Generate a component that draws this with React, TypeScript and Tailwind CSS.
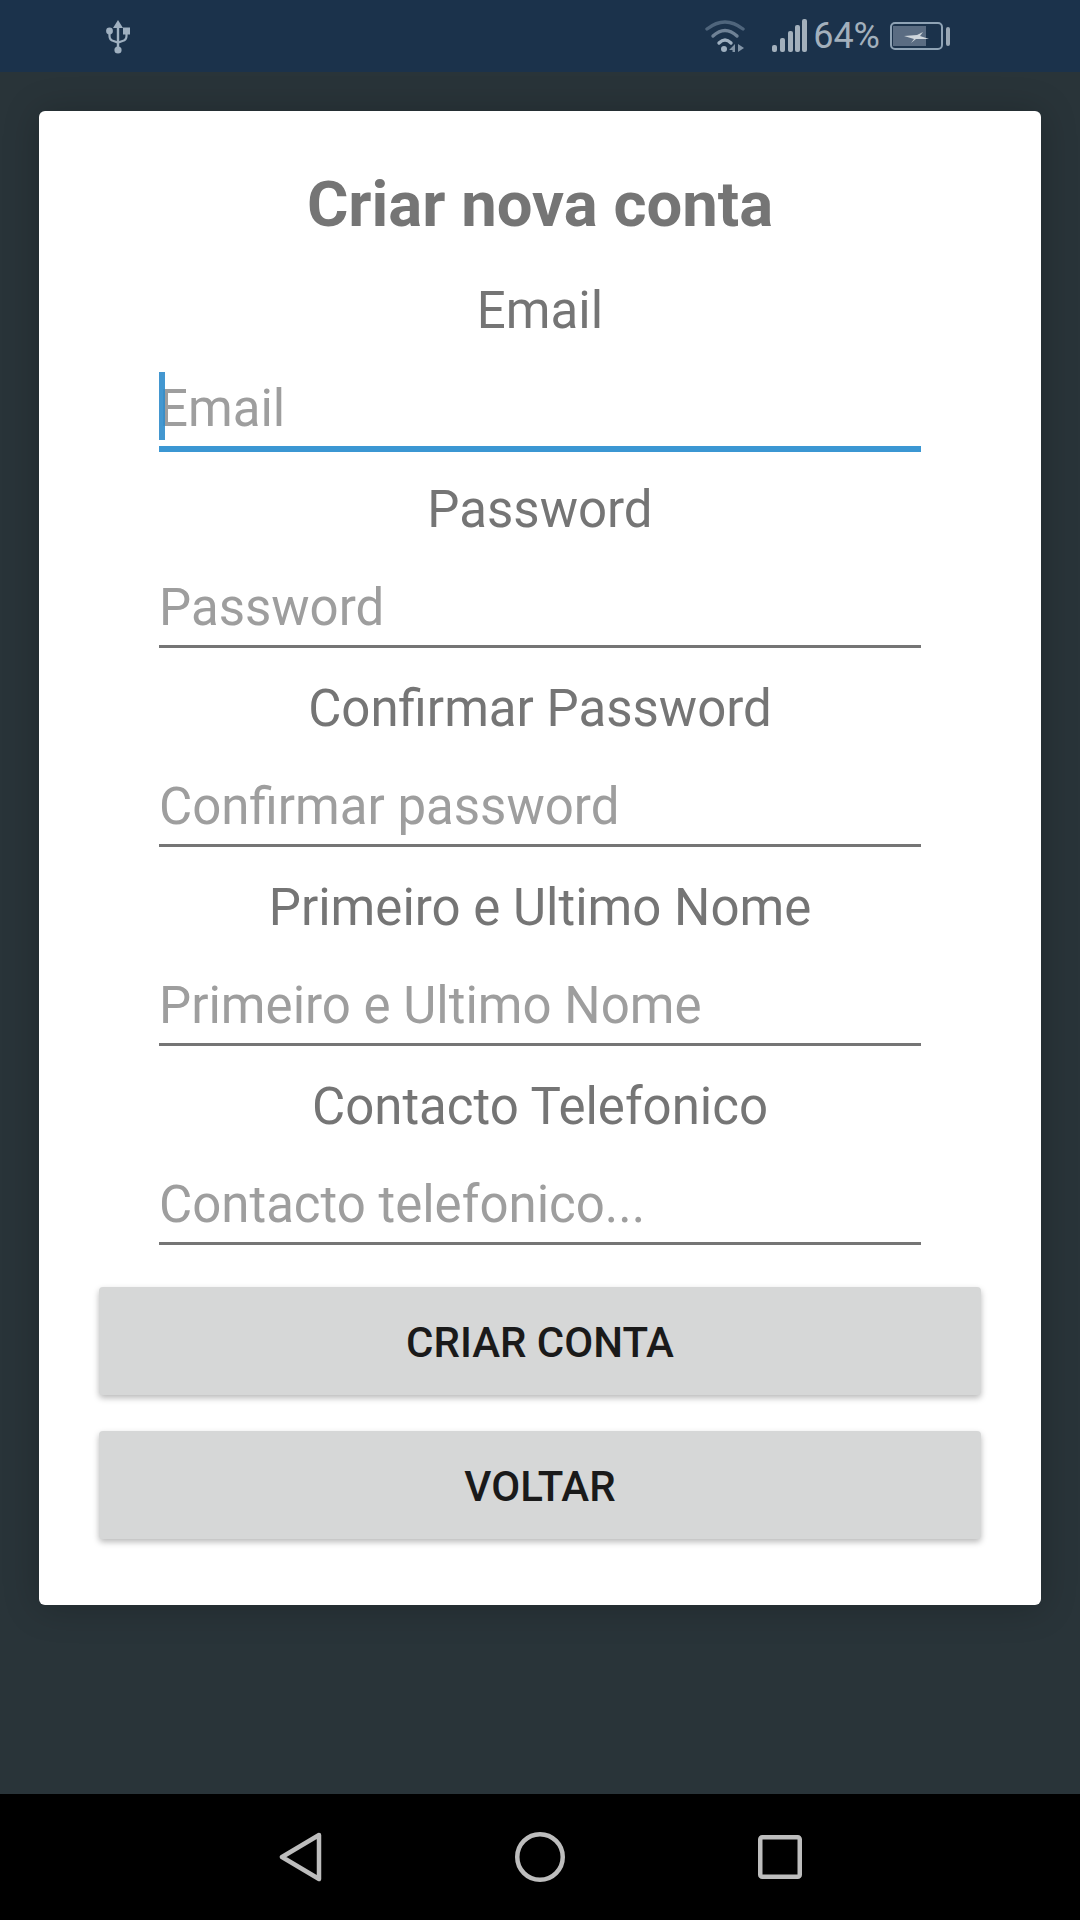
import React from "react";

const fields = [
  { label: "Password", ph: "Password" },
  { label: "Confirmar Password", ph: "Confirmar password" },
  { label: "Primeiro e Ultimo Nome", ph: "Primeiro e Ultimo Nome" },
  { label: "Contacto Telefonico", ph: "Contacto telefonico..." },
];

function Field({ label, ph, active }: { label: string; ph: string; active?: boolean }) {
  return (
    <div className="flex flex-col w-[762px] h-[199px]">
      <div className="h-[120px] pt-[2px] flex items-center justify-center text-[51px] text-[#757575]">{label}</div>
      <div className="relative h-[79px] pt-[2px] border-b-[3px] border-[#757575] flex items-center text-[51px] text-[#9e9e9e]">
        {active && <span className="absolute left-0 top-[2px] w-[6px] h-[68px] bg-[#2f8ccb]/90" />}
        {active && <span className="absolute left-0 right-0 bottom-[-6px] h-[6px] bg-[#3b97d3]" />}
        <span>{ph}</span>
      </div>
    </div>
  );
}

export default function App() {
  return (
    <div className="w-[1080px] h-[1920px] flex flex-col bg-[#293439] font-['Roboto',sans-serif] overflow-hidden">
      <div className="relative z-10 h-[72px] shrink-0 bg-[#1b324b] flex items-center justify-between pl-[105px] pr-[130px]">
        <svg width="26" height="36" viewBox="0 0 26 36" className="mt-[1px]">
          <g fill="#9fb0c0" stroke="#9fb0c0">
            <path d="M13 1l5 8h-10z" stroke="none" />
            <path d="M13 8v22" strokeWidth="2.4" fill="none" />
            <circle cx="13" cy="31" r="3.6" stroke="none" />
            <circle cx="4.5" cy="12" r="3.4" stroke="none" />
            <rect x="18" y="8.5" width="7" height="7" stroke="none" />
            <path d="M4.5 14v3q0 4 4 5l4.500 1.500l4.500-1.500q4-1 4-5v-3" strokeWidth="2.2" fill="none" />
          </g>
        </svg>
        <div className="flex items-center">
          <svg width="42" height="36" viewBox="0 0 42 36" className="mr-[25px]">
            <g fill="none" strokeLinecap="round">
              <path d="M2 11Q20 -3 38 11" stroke="#4f657c" strokeWidth="3.4" />
              <path d="M8 18Q20 7 32 18" stroke="#6f8296" strokeWidth="3.4" />
              <path d="M14 25Q20 19 26 25" stroke="#9fb0c0" strokeWidth="3.4" />
            </g>
            <circle cx="19" cy="31" r="3" fill="#9fb0c0" />
            <path d="M30 26v8h-2.500v-2h-3.500zM33 26l6 4-6 4z" fill="#8294a6" />
          </svg>
          <svg width="36" height="34" viewBox="0 0 36 34" className="mr-[5px]">
            <g fill="#a3b0bc">
              <rect x="0" y="26" width="5" height="7" rx="2" />
              <rect x="8" y="19" width="5" height="14" rx="2" />
              <rect x="16" y="12" width="5" height="21" rx="2" />
              <rect x="23" y="6" width="5" height="27" rx="2" />
              <rect x="30" y="0" width="5" height="33" rx="2" />
            </g>
          </svg>
          <span className="text-[36px] leading-none text-[#a3b0bc] mr-[10px]">64%</span>
          <div className="flex items-center">
            <div className="relative w-[53px] h-[28px] border-[2px] border-[#8fa3b5] rounded-[5px] px-[1px] py-[2px]">
              <div className="h-full w-[33px] bg-[#5a6c82]" />
              <svg width="25" height="12" viewBox="0 0 25 12" className="absolute left-[12px] top-[7px]">
                <path d="M0 5L13 4L19 1L16 5L25 8L12 8L7 12L10 8Z" fill="#cfd6dc" />
              </svg>
            </div>
            <div className="w-[4px] h-[19px] ml-[3px] bg-[#9aa8b5] rounded-[2px]" />
          </div>
        </div>
      </div>

      <div className="flex-1 flex flex-col items-center pt-[39px]">
        <div className="w-[1002px] h-[1494px] bg-white rounded-[6px] flex flex-col items-center pt-[55px] shadow-[0_2px_36px_rgba(0,0,0,0.22)]">
          <h1 className="h-[76px] text-[63.4px] leading-[76px] font-bold text-[#757575]">Criar nova conta</h1>
          <div className="mt-[8px] flex flex-col items-center">
            <Field label="Email" ph="Email" active />
            {fields.map((f) => (
              <Field key={f.label} label={f.label} ph={f.ph} />
            ))}
          </div>
          <div className="mt-[42px] flex flex-col gap-[36px]">
            <button className="w-[882px] h-[108px] pt-[3px] bg-[#d6d7d7] rounded-[4px] shadow-[0_3px_6px_rgba(0,0,0,0.28)] text-[42px] font-medium text-[#1a1a1a]">CRIAR CONTA</button>
            <button className="w-[882px] h-[108px] pt-[3px] bg-[#d6d7d7] rounded-[4px] shadow-[0_3px_6px_rgba(0,0,0,0.28)] text-[42px] font-medium text-[#1a1a1a]">VOLTAR</button>
          </div>
        </div>
      </div>

      <div className="relative z-10 h-[126px] shrink-0 bg-black flex items-center pl-[279px] gap-[193px]">
        <svg width="43" height="50" viewBox="0 0 43 50">
          <path d="M40 3L3 25L40 47Z" fill="none" stroke="#bdbdbd" strokeWidth="4.500" strokeLinejoin="round" />
        </svg>
        <svg width="50" height="50" viewBox="0 0 50 50">
          <circle cx="25" cy="25" r="22.750" fill="none" stroke="#bdbdbd" strokeWidth="4.500" />
        </svg>
        <svg width="44" height="44" viewBox="0 0 44 44">
          <rect x="2.250" y="2.250" width="39.500" height="39.500" rx="2" fill="none" stroke="#bdbdbd" strokeWidth="4.500" />
        </svg>
      </div>
    </div>
  );
}
